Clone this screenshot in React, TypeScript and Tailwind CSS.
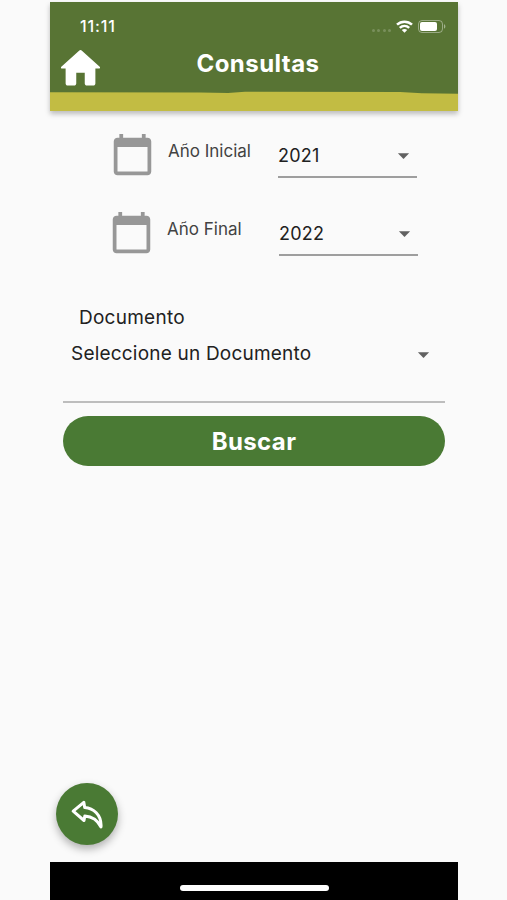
import clsx from "clsx";

function HomeIcon() {
  return (
    <svg viewBox="0 0 24 24" className="size-[51px] fill-white">
      <path d="M10 19v-5h4v5c0 .55.45 1 1 1h3c.55 0 1-.45 1-1v-7h1.7c.46 0 .68-.57.33-.87L12.67 3.6c-.38-.34-.96-.34-1.34 0l-8.36 7.53c-.34.3-.13.87.33.87H5v7c0 .55.45 1 1 1h3c.55 0 1-.45 1-1z" />
    </svg>
  );
}

function CalendarIcon() {
  return (
    <svg viewBox="0 0 24 24" className="size-[45px] flex-none fill-[#979797]">
      <path d="M20 3h-1V1h-2v2H7V1H5v2H4c-1.1 0-2 .9-2 2v16c0 1.1.9 2 2 2h16c1.1 0 2-.9 2-2V5c0-1.1-.9-2-2-2zm0 18H4V8h16v13z" />
    </svg>
  );
}

function CaretIcon() {
  return (
    <svg viewBox="0 0 24 24" className="size-[27px] flex-none fill-[#616161]">
      <path d="M7 10l5 5 5-5z" />
    </svg>
  );
}

function ReplyIcon() {
  return (
    <svg
      viewBox="0 0 32 30"
      className="h-[30px] w-8 fill-none stroke-white stroke-[3]"
      strokeLinejoin="round"
    >
      <path d="M2.2 12.200L12.800 3.300 13.700 8.500C22 9 30.800 15.500 30 28 26.500 21 21.500 17.500 13.800 17L13 21.500z" />
    </svg>
  );
}

function StatusBar() {
  return (
    <div className="flex h-[46px] items-start pl-[30px] pr-[12px] pt-[15px] text-white">
      <span className="-mt-px text-[16px] font-medium leading-5 tracking-[0.9px]">
        11:11
      </span>
      <div className="ml-auto flex items-center gap-[5px] pt-[3px]">
        <div className="flex gap-[2.5px] pt-2">
          {[0, 1, 2, 3].map((dot) => (
            <span
              key={dot}
              className="size-[3px] rounded-full bg-white/20"
            />
          ))}
        </div>
        <svg viewBox="0 0 17 13" className="h-[13px] w-[17px]">
          <g className="fill-none stroke-white stroke-[2.5]">
            <path d="M1 4.7C5.2.7 11.8.7 16 4.7" />
            <path d="M3.8 7.9c2.7-2.5 6.7-2.5 9.4 0" />
          </g>
          <path className="fill-white" d="M5.8 10c1.5-1.4 3.9-1.4 5.4 0L8.5 12.8z" />
        </svg>
        <svg viewBox="0 0 28 13" className="h-[13px] w-7">
          <rect
            x="0.5"
            y="0.5"
            width="24"
            height="12"
            rx="3.5"
            className="fill-none stroke-white/40"
          />
          <rect x="2" y="2" width="17" height="9" rx="2" className="fill-white" />
          <path className="fill-white/45" d="M26 4.3c1.8.6 1.8 3.8 0 4.4z" />
        </svg>
      </div>
    </div>
  );
}

function Header() {
  return (
    <header className="relative h-[109px] bg-[#587434] shadow-[0_3px_5px_rgba(0,0,0,0.25)]">
      <svg
        viewBox="0 0 408 20"
        className="absolute bottom-0 left-0 h-5 w-full fill-[#c2bc43]"
      >
        <path d="M0 1.2L150 1.5 178 2 195 .7 350 1 372 2.2 408 2.7V20H0z" />
      </svg>
      <StatusBar />
      <div className="grid grid-cols-[60px_1fr_52px]">
        <button aria-label="Inicio" className="-mt-[5px] ml-[5px]">
          <HomeIcon />
        </button>
        <h1 className="text-center text-[24px] font-bold leading-[31px] tracking-[0.45px] text-white">
          Consultas
        </h1>
      </div>
    </header>
  );
}

function YearField({
  label,
  value,
  className,
}: {
  label: string;
  value: string;
  className?: string;
}) {
  return (
    <div className={clsx("flex h-[46px] items-start", className)}>
      <CalendarIcon />
      <span className="ml-[13px] pt-[7px] text-[17px] leading-6 text-[#424242]">
        {label}
      </span>
      <button className="ml-auto flex h-[46px] w-[139px] items-center justify-between border-b-2 border-[#9e9e9e] pt-[3px] text-[18px] tracking-[0.2px] text-[#212121]">
        <span>{value}</span>
        <CaretIcon />
      </button>
    </div>
  );
}

export default function App() {
  return (
    <div className="h-[900px] overflow-hidden bg-[#fafafa] pt-[2px] font-['Inter','Liberation_Sans',sans-serif]">
      <main className="ml-[50px] flex h-[898px] w-[408px] flex-col">
        <Header />
        <YearField
          label="Año Inicial"
          value="2021"
          className="ml-[60px] mt-[21px] w-[307px]"
        />
        <YearField
          label="Año Final"
          value="2022"
          className="ml-[59px] mt-[32px] w-[309px]"
        />
        <section className="ml-[13px] mt-[48px] w-[382px]">
          <h2 className="pl-4 text-[19px] leading-7 tracking-[0.25px] text-[#212121]">
            Documento
          </h2>
          <button className="flex h-[71px] w-full items-start justify-between border-b-2 border-[#bdbdbd] pl-2 pr-[8px] pt-[8px] text-[19px] leading-7 tracking-[0.2px] text-[#212121]">
            <span>Seleccione un Documento</span>
            <span className="pt-px">
              <CaretIcon />
            </span>
          </button>
          <button className="mt-[13px] h-[50px] w-full rounded-full bg-[#4a7a34] pt-px text-[24px] font-bold tracking-[0.4px] text-white">
            Buscar
          </button>
        </section>
        <button
          aria-label="Volver"
          className="mb-[17px] ml-[6px] mt-auto flex size-[62px] items-center justify-center rounded-full bg-[#4a7a34] shadow-[0_4px_8px_rgba(0,0,0,0.3)]"
        >
          <ReplyIcon />
        </button>
        <footer className="flex h-[38px] justify-center bg-black pt-[23px]">
          <div className="h-[6px] w-[149px] rounded-full bg-white" />
        </footer>
      </main>
    </div>
  );
}
